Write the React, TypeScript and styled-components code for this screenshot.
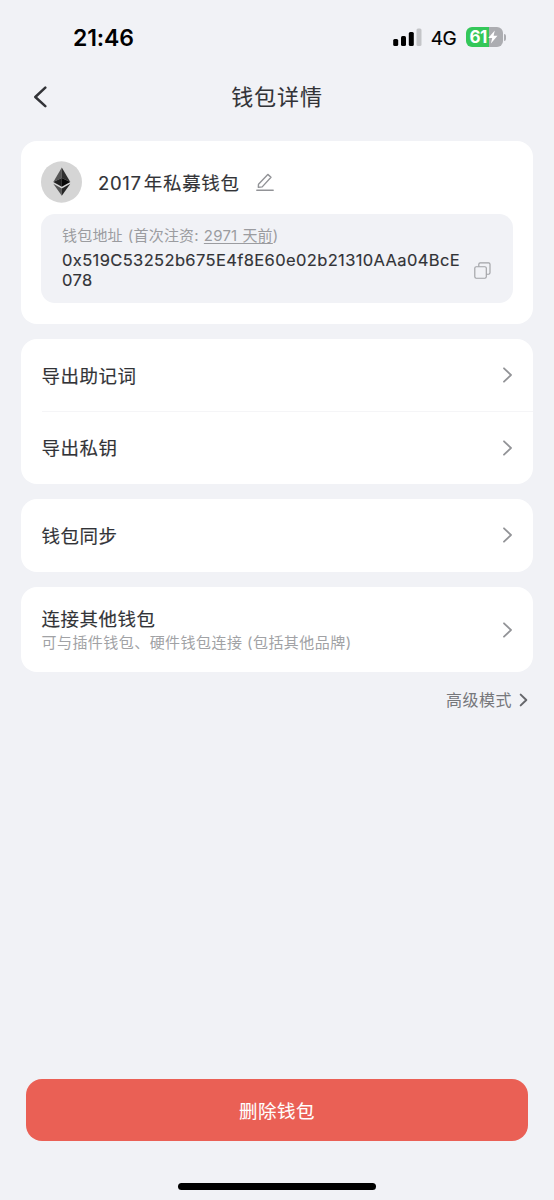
import React from 'react';
import styled, { createGlobalStyle } from 'styled-components';

const GlobalStyle = createGlobalStyle`
  * { box-sizing: border-box; }
  html, body { margin: 0; padding: 0; background: #f1f2f6; }
  body {
    font-family: Inter, "Noto Sans CJK SC", sans-serif;
    color: #323337;
  }
  button { font: inherit; color: inherit; border: 0; background: none; padding: 0; margin: 0; text-align: left; }
  svg { display: block; flex: none; }
`;

const Screen = styled.div`
  width: 554px;
  height: 1200px;
  display: flex;
  flex-direction: column;
  overflow: hidden;
  background: #f1f2f6;
`;

const StatusBar = styled.div`
  height: 74px;
  padding: 0 48px 0 73px;
  display: flex;
  align-items: center;
  color: #000;
`;

const Clock = styled.span`
  flex: 1;
  font-size: 23px;
  font-weight: 600;
  line-height: 28px;
  letter-spacing: -0.1px;
  padding-top: 1px;
`;

const Network = styled.span`
  margin: 3px 9px 0 9px;
  font-size: 19px;
  line-height: 24px;
  letter-spacing: -0.3px;
  -webkit-text-stroke: 0.2px #000;
`;

const Battery = styled.div`
  display: flex;
  align-items: center;
  gap: 1px;
`;

const BatteryBody = styled.div`
  width: 37.5px;
  height: 20px;
  border-radius: 6px;
  display: flex;
  align-items: center;
  padding-left: 4px;
  background: linear-gradient(to right, #34c759 0 61%, #acadb1 61%);
  color: #fff;
  font-size: 17px;
  font-weight: 700;
  line-height: 20px;
  letter-spacing: -0.6px;
`;

const BatteryCap = styled.div`
  width: 2px;
  height: 7px;
  border-radius: 0 2px 2px 0;
  background: #acadb1;
`;

const NavBar = styled.header`
  height: 67px;
  padding: 0 33px 21px;
  display: grid;
  grid-template-columns: 60px 1fr 60px;
  align-items: center;
`;

const Title = styled.h1`
  margin: 0;
  text-align: center;
  font-size: 22px;
  font-weight: 400;
  line-height: 30px;
  letter-spacing: 0.9px;
  -webkit-text-stroke: 0.1px currentColor;
`;

const Cards = styled.main`
  padding: 0 21px;
  display: flex;
  flex-direction: column;
  gap: 15.5px;
`;

const Card = styled.section`
  background: #fff;
  border-radius: 16px;
  overflow: hidden;
`;

const WalletCard = styled(Card)`
  height: 182.5px;
  padding: 20px 20.5px 20px 20px;
`;

const WalletHead = styled.div`
  height: 42px;
  display: flex;
  align-items: center;
`;

const WalletName = styled.h2`
  margin: 2px 16px 0 16px;
  font-size: 18.5px;
  font-weight: 400;
  line-height: 26px;
  letter-spacing: 0.7px;
  -webkit-text-stroke: 0.15px currentColor;
`;

const Year = styled.span`
  margin-right: 2px;
`;

const AddressBox = styled.div`
  height: 89px;
  margin-top: 10.5px;
  padding: 12px 22px 0 21px;
  border-radius: 14px;
  background: #f1f2f6;
  display: flex;
  justify-content: space-between;
`;

const AddressLabel = styled.div`
  font-size: 15px;
  line-height: 20px;
  letter-spacing: 0.2px;
  word-spacing: 0.6px;
  color: #9b9ca0;
  white-space: nowrap;
`;

const Since = styled.span`
  text-decoration: underline;
  text-decoration-thickness: 1px;
  text-underline-offset: 2px;
`;

const Address = styled.div`
  margin-top: 4px;
  font-size: 16.5px;
  line-height: 20.5px;
  letter-spacing: 0.37px;
  white-space: nowrap;
  -webkit-text-stroke: 0.15px currentColor;
`;

const CopyButton = styled.button`
  align-self: flex-start;
  margin-top: 36px;
`;

const Row = styled.button<{ $height: number }>`
  width: 100%;
  height: ${(p) => p.$height}px;
  padding-left: 20.5px;
  display: flex;
`;

const RowInner = styled.span<{ $divided?: boolean }>`
  flex: 1;
  display: flex;
  align-items: center;
  justify-content: space-between;
  padding-right: 20px;
  border-bottom: ${(p) => (p.$divided ? '1px solid #f5f5f7' : '0')};
`;

const RowText = styled.span<{ $single: boolean }>`
  display: flex;
  flex-direction: column;
  padding-top: ${(p) => (p.$single ? 2.5 : 0)}px;
`;

const RowTitle = styled.span`
  font-size: 18.5px;
  line-height: 25px;
  letter-spacing: 0.5px;
  -webkit-text-stroke: 0.15px currentColor;
`;

const RowHint = styled.span`
  font-size: 15px;
  line-height: 21px;
  letter-spacing: 0.45px;
  color: #a1a2a5;
`;

const AdvancedLink = styled.button`
  align-self: flex-end;
  margin: 16px 26px 0 0;
  display: flex;
  align-items: center;
  gap: 7px;
  font-size: 16px;
  line-height: 24px;
  letter-spacing: 0.5px;
  color: #76777b;
`;

const Footer = styled.footer`
  margin-top: auto;
  padding: 0 26px 10.5px;
  display: flex;
  flex-direction: column;
  align-items: center;
`;

const DeleteButton = styled.button`
  width: 100%;
  height: 61.5px;
  border-radius: 16px;
  background: #ea6055;
  color: #fff;
  text-align: center;
  font-size: 18.5px;
  letter-spacing: 0.5px;
  -webkit-text-stroke: 0.1px #fff;
`;

const HomeIndicator = styled.div`
  width: 198px;
  height: 6.5px;
  margin-top: 42.5px;
  border-radius: 4px;
  background: #000;
`;

const Signal = () => (
  <svg width="29" height="18" viewBox="0 0 29 18">
    <rect x="0.2" y="11" width="5" height="7" rx="1.5" />
    <rect x="8" y="8" width="5" height="10" rx="1.5" />
    <rect x="15.8" y="4" width="5" height="14" rx="1.5" />
    <rect x="23.5" y="0.5" width="5" height="17.5" rx="1.5" fill="#c4c5c8" />
  </svg>
);

const Bolt = () => (
  <svg width="11" height="14" viewBox="0 0 11 14">
    <path d="M7.8 0.5 1.2 7.9H5.2L3.9 13.5 10.5 5.8H6.6Z" fill="#fff" />
  </svg>
);

const BackIcon = () => (
  <svg width="14" height="22" viewBox="0 0 14 22">
    <path d="M12.3 1.7 2.3 11 12.3 20.2" fill="none" stroke="#323337" strokeWidth="2.5" strokeLinecap="round" strokeLinejoin="round" />
  </svg>
);

const Chevron = () => (
  <svg width="11" height="16" viewBox="0 0 11 16">
    <path d="M2 1.3 9 8 2 14.7" fill="none" stroke="#929397" strokeWidth="1.8" strokeLinecap="round" strokeLinejoin="round" />
  </svg>
);

const SmallChevron = () => (
  <svg width="9" height="14" viewBox="0 0 9 14">
    <path d="M1.7 1.6 7.3 7 1.7 12.4" fill="none" stroke="#66676b" strokeWidth="2" strokeLinecap="round" strokeLinejoin="round" />
  </svg>
);

const EthIcon = () => (
  <svg width="41" height="42" viewBox="0 0 41 42">
    <ellipse cx="20.5" cy="21" rx="20.5" ry="20.7" fill="#d5d5d5" />
    <path d="M20.8 6.5 12.3 21 20.8 17.1Z" fill="#565656" />
    <path d="M20.8 6.5 29.3 21 20.8 17.1Z" fill="#303030" />
    <path d="M12.3 21 20.8 17.1V25.8Z" fill="#202020" />
    <path d="M29.3 21 20.8 17.1V25.8Z" fill="#080808" />
    <path d="M12.3 22.7 20.8 27.6V34.8Z" fill="#565656" />
    <path d="M29.3 22.7 20.8 27.6V34.8Z" fill="#252525" />
  </svg>
);

const EditIcon = () => (
  <svg width="18" height="18" viewBox="0 0 18 18" fill="none" stroke="#929397" strokeWidth="1.4" strokeLinecap="round" strokeLinejoin="round">
    <path d="M11.8 1.4 15 4.2 6.2 13.9 2.3 14.3 2.5 11.2Z" />
    <path d="M0.8 17.2H17.2" />
  </svg>
);

const CopyIcon = () => (
  <svg width="17" height="17" viewBox="0 0 17 17" fill="none" stroke="#a1a2a6" strokeWidth="1.15">
    <rect x="0.8" y="4.7" width="11.5" height="11.5" rx="1.4" />
    <path d="M4.8 4.5V2.2Q4.8 0.8 6.2 0.8H14.6Q16 0.8 16 2.2V10.8Q16 12.2 14.6 12.2H12.5" />
  </svg>
);

interface ItemProps {
  title: string;
  hint?: string;
  height: number;
  divided?: boolean;
}

const Item = ({ title, hint, height, divided }: ItemProps) => (
  <Row $height={height}>
    <RowInner $divided={divided}>
      <RowText $single={!hint}>
        <RowTitle>{title}</RowTitle>
        {hint && <RowHint>{hint}</RowHint>}
      </RowText>
      <Chevron />
    </RowInner>
  </Row>
);

export default function App() {
  return (
    <>
      <GlobalStyle />
      <Screen lang="zh-CN">
        <StatusBar>
          <Clock>21:46</Clock>
          <Signal />
          <Network>4G</Network>
          <Battery>
            <BatteryBody>61<Bolt /></BatteryBody>
            <BatteryCap />
          </Battery>
        </StatusBar>
        <NavBar>
          <button aria-label="返回"><BackIcon /></button>
          <Title>钱包详情</Title>
        </NavBar>
        <Cards>
          <WalletCard>
            <WalletHead>
              <EthIcon />
              <WalletName><Year>2017</Year>年私募钱包</WalletName>
              <EditIcon />
            </WalletHead>
            <AddressBox>
              <div>
                <AddressLabel>钱包地址 (首次注资: <Since>2971 天前</Since>)</AddressLabel>
                <Address>0x519C53252b675E4f8E60e02b21310AAa04BcE<br />078</Address>
              </div>
              <CopyButton aria-label="复制"><CopyIcon /></CopyButton>
            </AddressBox>
          </WalletCard>
          <Card>
            <Item title="导出助记词" height={72.5} divided />
            <Item title="导出私钥" height={72} />
          </Card>
          <Card>
            <Item title="钱包同步" height={72.5} />
          </Card>
          <Card>
            <Item title="连接其他钱包" hint="可与插件钱包、硬件钱包连接 (包括其他品牌)" height={85} />
          </Card>
        </Cards>
        <AdvancedLink>高级模式<SmallChevron /></AdvancedLink>
        <Footer>
          <DeleteButton>删除钱包</DeleteButton>
          <HomeIndicator />
        </Footer>
      </Screen>
    </>
  );
}
